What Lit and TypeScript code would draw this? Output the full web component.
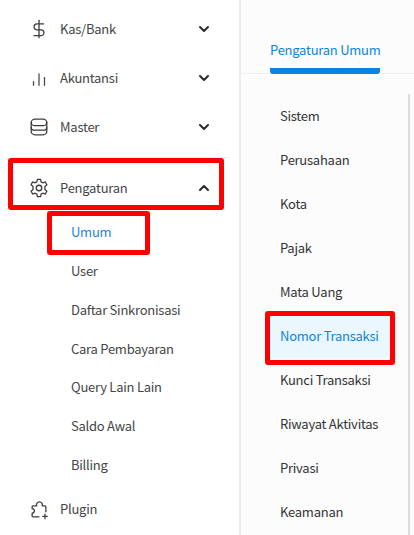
import { LitElement, html, css, svg } from "lit";
import { customElement } from "lit/decorators.js";

const ic = (body: unknown) => html`<svg class="ic" viewBox="0 0 24 24" fill="none" stroke="#3c3c3c" stroke-width="1.4" stroke-linecap="round" stroke-linejoin="round">${body}</svg>`;
const icons: Record<string, unknown> = {
  dollar: ic(svg`<path d="M12 2.500v19"/><path d="M17 6.500H9.800a3.200 3.200 0 0 0 0 6.400h4.400a3.200 3.200 0 0 1 0 6.400H6.500"/>`),
  chart: ic(svg`<path d="M6 20v-4" stroke="#4a4a4a"/><path d="M12 20V7.500" stroke="#4a4a4a"/><path d="M18 20V11.500" stroke="#4a4a4a"/>`),
  db: ic(svg`<path d="M3.500 7c0-2 2-3.500 4-3.500h9c2 0 4 1.500 4 3.500v10c0 2-2 3.500-4 3.500h-9c-2 0-4-1.500-4-3.500z"/><path d="M3.500 7c0 2 2 3.500 4 3.500h9c2 0 4-1.500 4-3.500"/><path d="M3.500 12.500c0 2 2 3 4 3h9c2 0 4-1 4-3"/>`),
  gear: ic(svg`<circle cx="12" cy="12" r="3"/><path d="M10.300 2.500h3.400l.6 2.800 1.900 1 2.700-.9 1.700 3-2.100 1.900v3.400l2.100 1.900-1.700 3-2.700-.9-1.900 1-.6 2.800h-3.400l-.6-2.800-1.900-1-2.700.9-1.700-3 2.100-1.900v-3.400L3.300 8.400l1.700-3 2.700.9 1.900-1z"/>`),
  plugin: ic(svg`<path d="M12 20.500H5.500a1 1 0 0 1-1-1v-3a2.500 2.500 0 0 0 0-5v-2a1 1 0 0 1 1-1h4a3.200 3.200 0 1 1 6 0h3a1 1 0 0 1 1 1V15"/><path d="M18.500 17.500v5"/><path d="M16 20h5"/>`),
};
const chevron = (up: boolean) => html`<svg class="chev" viewBox="0 0 12 8" fill="none" stroke="#2b2b2b" stroke-width="2" stroke-linecap="round" stroke-linejoin="round"><path d="${up ? "M2 6l4-4 4 4" : "M2 2l4 4 4-4"}"/></svg>`;

@customElement("app-root")
export class AppRoot extends LitElement {
  static styles = css`
    :host { display: block; width: 414px; height: 535px; overflow: hidden; position: relative; background: #fff;
      font-family: "Noto Sans CJK JP", "Noto Sans", sans-serif; font-size: 13px; letter-spacing: -0.25px; color: #454545; }
    .page { display: grid; grid-template-columns: 241px 1fr; height: 535px; }
    .side { border-right: 2px solid #ececec; padding-top: 4px; display: flex; flex-direction: column; }
    .row { display: flex; align-items: center; height: 49px; padding-left: 28px; padding-right: 29px; flex: none; }
    .ic { width: 22px; height: 22px; flex: none; margin-right: 10px; }
    .row span { flex: 1; line-height: 20px; }
    .chev { width: 12px; height: 8px; flex: none; }
    .sep { height: 1px; background: #ececec; margin: 6px 10px 0 10px; flex: none; }
    .row.open { height: 50px; padding-top: 5px; }
    .sub { display: flex; flex-direction: column; flex: none; }
    .sub div { height: 38.850px; line-height: 38.850px; padding-left: 71px; }
    .sub div.on { color: #1a86de; }
    .row.plugin { height: 48px; }
    .main { background: #fcfcfc; display: flex; flex-direction: column; }
    .tabs { height: 74px; flex: none; box-sizing: border-box; border-bottom: 1px solid #f0f0f0; padding-left: 29px; display: flex; }
    .tab { width: 110px; height: 74px; box-sizing: border-box; padding-top: 40px; line-height: 20px; color: #0a84e0; border-bottom: 6px solid #0a84e0; border-radius: 0 0 3px 3px; white-space: nowrap; }
    .body { margin: 20px 4px 0 0; border-right: 2px solid #dcdcdc; flex: 1; padding-left: 24px; display: flex; flex-direction: column; color: #333; }
    .body div { height: 44px; line-height: 44px; flex: none; padding-left: 15px; margin-right: 18px; border-radius: 3px; white-space: nowrap; }
    .body div.on { background: #ebf7ff; color: #0a84e0; }
    .box { position: absolute; border: 5px solid #ff0000; border-radius: 3px; box-sizing: border-box; }
    .b1 { left: 8px; top: 158px; width: 216px; height: 52px; }
    .b2 { left: 47px; top: 211px; width: 103px; height: 44px; }
    .b3 { left: 265px; top: 311px; width: 130px; height: 54px; }
  `;
  render() {
    const subs = ["Umum", "User", "Daftar Sinkronisasi", "Cara Pembayaran", "Query Lain Lain", "Saldo Awal", "Billing"];
    const items = ["Sistem", "Perusahaan", "Kota", "Pajak", "Mata Uang", "Nomor Transaksi", "Kunci Transaksi", "Riwayat Aktivitas", "Privasi", "Keamanan"];
    return html`<div class="page">
      <div class="side">
        <div class="row">${icons.dollar}<span>Kas/Bank</span>${chevron(false)}</div>
        <div class="row">${icons.chart}<span>Akuntansi</span>${chevron(false)}</div>
        <div class="row">${icons.db}<span>Master</span>${chevron(false)}</div>
        <div class="sep"></div>
        <div class="row open">${icons.gear}<span>Pengaturan</span>${chevron(true)}</div>
        <div class="sub">${subs.map((s) => html`<div class=${s === "Umum" ? "on" : ""}>${s}</div>`)}</div>
        <div class="row plugin">${icons.plugin}<span>Plugin</span></div>
      </div>
      <div class="main">
        <div class="tabs"><div class="tab">Pengaturan Umum</div></div>
        <div class="body">${items.map((s) => html`<div class=${s === "Nomor Transaksi" ? "on" : ""}>${s}</div>`)}</div>
      </div>
    </div>
    <div class="box b1"></div><div class="box b2"></div><div class="box b3"></div>`;
  }
}
